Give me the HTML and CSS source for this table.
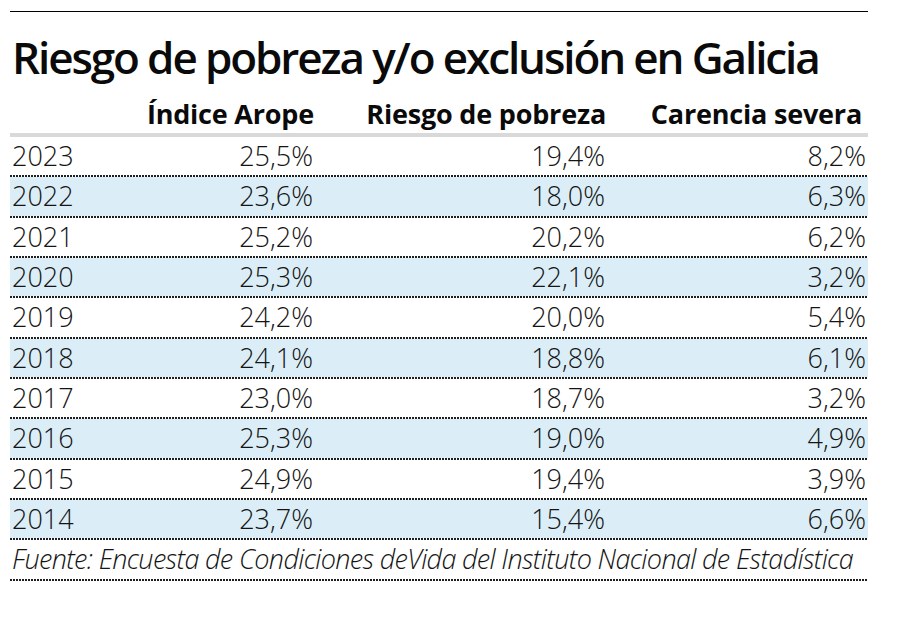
FILE: index.html
```html
<!DOCTYPE html>
<html lang="es">
<head>
<meta charset="utf-8">
<title>Riesgo de pobreza y/o exclusión en Galicia</title>
<link rel="stylesheet" href="styles.css">
</head>
<body>
<div class="chart">
  <div class="rule"></div>
  <h1 class="title">Riesgo de pobreza y/o exclusión en Galicia</h1>
  <div class="head">
    <div class="cell year"></div>
    <div class="cell num">Índice Arope</div>
    <div class="cell num">Riesgo de pobreza</div>
    <div class="cell num last">Carencia severa</div>
  </div>
  <div class="bar"></div>
  <div class="row"><div class="cells"><div class="cell year">2023</div><div class="cell num">25,5%</div><div class="cell num">19,4%</div><div class="cell num last">8,2%</div></div></div>
  <div class="row alt"><div class="cells"><div class="cell year">2022</div><div class="cell num">23,6%</div><div class="cell num">18,0%</div><div class="cell num last">6,3%</div></div></div>
  <div class="row"><div class="cells"><div class="cell year">2021</div><div class="cell num">25,2%</div><div class="cell num">20,2%</div><div class="cell num last">6,2%</div></div></div>
  <div class="row alt"><div class="cells"><div class="cell year">2020</div><div class="cell num">25,3%</div><div class="cell num">22,1%</div><div class="cell num last">3,2%</div></div></div>
  <div class="row"><div class="cells"><div class="cell year">2019</div><div class="cell num">24,2%</div><div class="cell num">20,0%</div><div class="cell num last">5,4%</div></div></div>
  <div class="row alt"><div class="cells"><div class="cell year">2018</div><div class="cell num">24,1%</div><div class="cell num">18,8%</div><div class="cell num last">6,1%</div></div></div>
  <div class="row"><div class="cells"><div class="cell year">2017</div><div class="cell num">23,0%</div><div class="cell num">18,7%</div><div class="cell num last">3,2%</div></div></div>
  <div class="row alt"><div class="cells"><div class="cell year">2016</div><div class="cell num">25,3%</div><div class="cell num">19,0%</div><div class="cell num last">4,9%</div></div></div>
  <div class="row"><div class="cells"><div class="cell year">2015</div><div class="cell num">24,9%</div><div class="cell num">19,4%</div><div class="cell num last">3,9%</div></div></div>
  <div class="row alt"><div class="cells"><div class="cell year">2014</div><div class="cell num">23,7%</div><div class="cell num">15,4%</div><div class="cell num last">6,6%</div></div></div>
  <div class="row source"><div class="cells"><div class="cell note">Fuente: Encuesta de Condiciones deVida del Instituto Nacional de Estadística</div></div></div>
</div>
</body>
</html>
```
FILE: styles.css
```css
html, body {
  margin: 0;
  padding: 0;
  background: #fff;
}

body {
  font-family: "Open Sans", "Noto Sans", sans-serif;
  color: #141414;
}

.chart {
  width: 858px;
  margin-left: 10px;
  padding-top: 11px;
}

.rule {
  height: 1px;
  background: #000;
}

.title {
  margin: 19px 0 0 2px;
  font-size: 44px;
  line-height: 52px;
  font-weight: 600;
  letter-spacing: -2.1px;
  color: #0a0a0a;
  white-space: nowrap;
}

.head,
.cells {
  display: grid;
  grid-template-columns: 126px 180px 292px 260px;
}

.head {
  margin-top: 16px;
  height: 30px;
  padding-bottom: 4px;
  font-size: 27px;
  line-height: 30px;
  font-weight: 700;
  letter-spacing: -0.2px;
  color: #0a0a0a;
}

.head .cell.num {
  padding-right: 2px;
}

.head .cell.last {
  padding-right: 6px;
}

.bar {
  height: 4px;
  background: #d9d9d9;
}

.row::after {
  content: "";
  display: block;
  height: 2px;
  background-image: linear-gradient(to right, #1e1e1e 2px, transparent 2px);
  background-size: 3px 2px;
  background-repeat: repeat-x;
}

.cells {
  height: 38.33px;
  font-size: 27px;
  line-height: 38.33px;
  font-weight: 300;
}

.alt .cells {
  background: #dbeef8;
}

.cell {
  white-space: nowrap;
}

.cell.year {
  padding-left: 2px;
}

.cell.num {
  text-align: right;
  padding-right: 3px;
}

.cell.last {
  padding-right: 2px;
}

.source .cells {
  display: block;
}

.note {
  padding-left: 2px;
  font-style: italic;
  letter-spacing: -0.65px;
}
```
